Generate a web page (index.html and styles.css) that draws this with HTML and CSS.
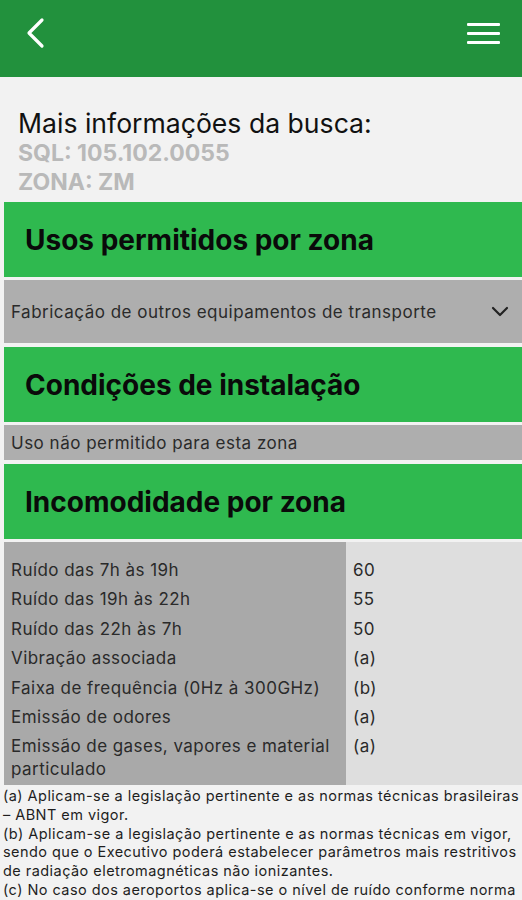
FILE: index.html
```html
<!DOCTYPE html>
<html lang="pt">
  <head>
    <meta charset="UTF-8" />
    <meta name="viewport" content="width=device-width, initial-scale=1.0" />
    <title>Mais informações</title>
    <link rel="stylesheet" href="styles.css">
  </head>
  <body>
    <div class="topbar">
      <a class="back" href="javascript:;">
        <svg width="24" height="34" viewBox="0 0 24 34">
          <polyline points="17,4 4,17 17,30" fill="none" stroke="#fff" stroke-width="3.2" stroke-linecap="round" stroke-linejoin="round" />
        </svg>
      </a>
      <a class="menu" href="javascript:;">
        <span></span>
        <span></span>
        <span></span>
      </a>
    </div>

    <div class="intro">
      <h1>Mais informações da busca:</h1>
      <p>SQL: 105.102.0055</p>
      <p>ZONA: ZM</p>
    </div>

    <div class="blocks">
      <div class="block-title">Usos permitidos por zona</div>
      <div class="select">
        <span>Fabricação de outros equipamentos de transporte</span>
        <svg width="18" height="12" viewBox="0 0 18 12">
          <polyline points="2,2 9,9 16,2" fill="none" stroke="#222" stroke-width="2.2" stroke-linecap="round" stroke-linejoin="round" />
        </svg>
      </div>

      <div class="block-title">Condições de instalação</div>
      <div class="note-row">Uso não permitido para esta zona</div>

      <div class="block-title">Incomodidade por zona</div>
      <table class="grid">
        <tr><td>Ruído das 7h às 19h</td><td>60</td></tr>
        <tr><td>Ruído das 19h às 22h</td><td>55</td></tr>
        <tr><td>Ruído das 22h às 7h</td><td>50</td></tr>
        <tr><td>Vibração associada</td><td>(a)</td></tr>
        <tr><td>Faixa de frequência (0Hz à 300GHz)</td><td>(b)</td></tr>
        <tr><td>Emissão de odores</td><td>(a)</td></tr>
        <tr><td>Emissão de gases, vapores e material particulado</td><td>(a)</td></tr>
      </table>
    </div>

    <div class="footnotes">
      <p>(a) Aplicam-se a legislação pertinente e as normas técnicas brasileiras – ABNT em vigor.</p>
      <p>(b) Aplicam-se a legislação pertinente e as normas técnicas em vigor, sendo que o Executivo poderá estabelecer parâmetros mais restritivos de radiação eletromagnéticas não ionizantes.</p>
      <p>(c) No caso dos aeroportos aplica-se o nível de ruído conforme norma específica.</p>
    </div>
  </body>
</html>
```

FILE: styles.css
```css
* {
  padding: 0px;
  margin: 0px;
  box-sizing: border-box;
}
body {
  background-color: #f2f2f2;
  font-family: Inter, "Liberation Sans", Arial, sans-serif;
  color: #111;
  overflow-x: hidden;
}

/* barra superior */
.topbar {
  height: 77px;
  background-color: #22913d;
  display: flex;
  align-items: flex-start;
  justify-content: space-between;
  padding: 16px 22px 0px 25px;
}
.back {
  display: block;
}
.menu {
  display: flex;
  flex-direction: column;
  gap: 6px;
  padding-top: 7px;
}
.menu span {
  display: block;
  width: 33px;
  height: 3px;
  background-color: #fff;
  border-radius: 1px;
}

/* informacoes da busca */
.intro {
  height: 125px;
  padding: 30px 0px 0px 18px;
}
.intro h1 {
  font-size: 26.6px;
  font-weight: normal;
  line-height: 32px;
  color: #111;
}
.intro p {
  font-size: 23px;
  font-weight: bold;
  line-height: 29px;
  color: #b9b9b9;
}

/* blocos */
.blocks {
  margin-left: 4px;
}
.block-title {
  height: 75px;
  background-color: #2fb94f;
  display: flex;
  align-items: center;
  padding-left: 21px;
  font-size: 28px;
  font-weight: bold;
  color: #0a0a0a;
  margin-top: 4px;
}
.block-title:first-child {
  margin-top: 0px;
}
.select {
  height: 63px;
  margin-top: 3px;
  background-color: #aeaeae;
  display: flex;
  align-items: center;
  justify-content: space-between;
  padding: 0px 13px 0px 7px;
  font-size: 17px;
  letter-spacing: 0.5px;
  color: #2a2a2a;
}
.note-row {
  height: 35px;
  margin-top: 3px;
  background-color: #aeaeae;
  display: flex;
  align-items: center;
  padding-left: 7px;
  font-size: 17px;
  letter-spacing: 0.5px;
  color: #2a2a2a;
}

/* tabela */
.grid {
  width: 100%;
  margin-top: 3px;
  border-collapse: collapse;
  font-size: 17px;
  letter-spacing: 0.45px;
  line-height: 23px;
  color: #2a2a2a;
}
.grid td {
  vertical-align: top;
  padding: 3.2px 8px 3.2px 7px;
  background-color: #dedede;
}
.grid td:first-child {
  width: 342px;
  background-color: #a9a9a9;
}
.grid tr:first-child td {
  padding-top: 17px;
}
.grid tr:last-child td {
  padding-bottom: 4px;
}

/* notas */
.footnotes {
  padding: 2px 0px 0px 3px;
  font-size: 14.5px;
  letter-spacing: 0.45px;
  line-height: 18.7px;
  color: #1e1e1e;
}
```
